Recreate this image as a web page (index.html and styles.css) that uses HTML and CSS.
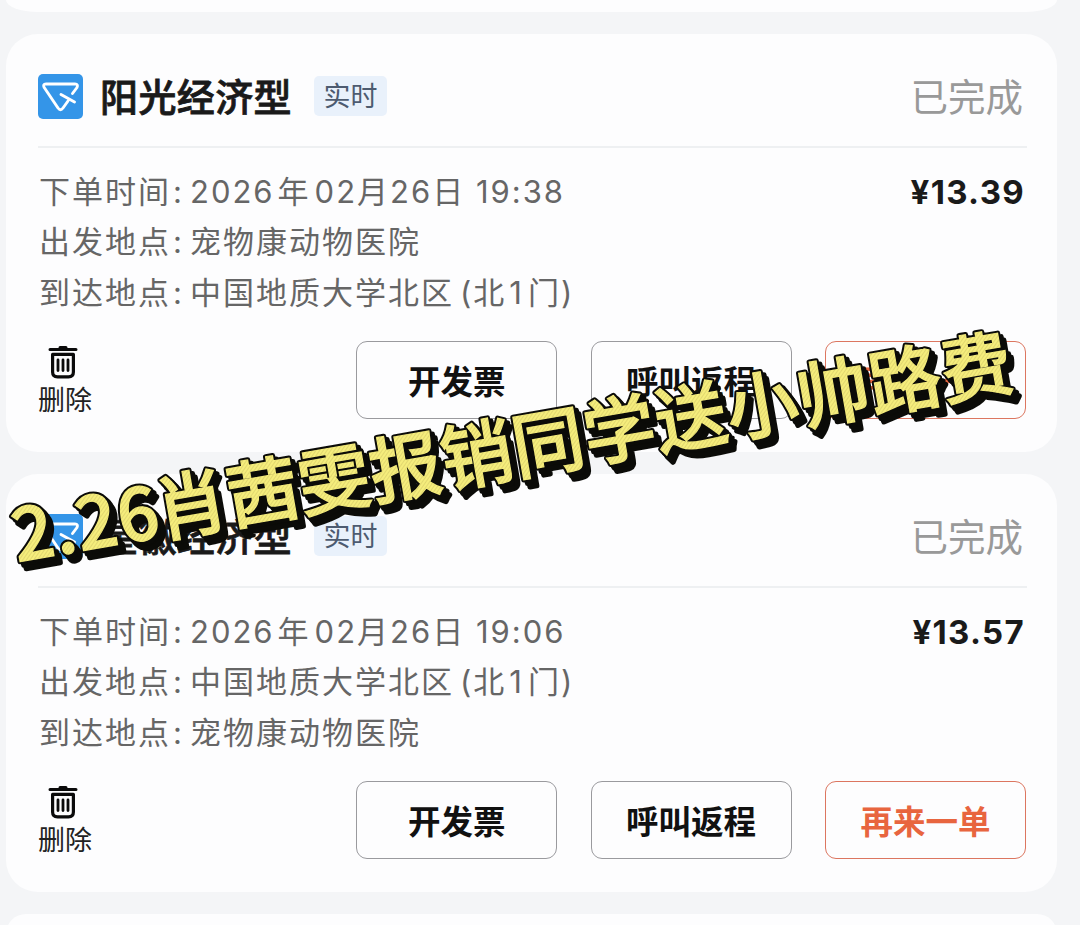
FILE: index.html
```
<!DOCTYPE html>
<html lang="zh-CN">
<head>
  <meta charset="UTF-8" />
  <meta name="viewport" content="width=device-width, initial-scale=1.0"/>
  <title>我的订单</title>
  <link rel="stylesheet" href="styles.css">
</head>
<body>

<svg width="0" height="0" class="defs">
  <symbol id="logo" viewBox="0 0 45 45">
    <rect width="45" height="45" rx="5" fill="#3495e8"/>
    <path d="M34.5 19.500 L39 13.500 Q40.500 10 37 10 H8 Q4.500 10 6.200 13.500 L20 34 Q22.500 37.500 25 34 L30 27 M23 20.500 L36.500 28" fill="none" stroke="#fff" stroke-width="2.900" stroke-linecap="round" stroke-linejoin="round"/>
  </symbol>
  <symbol id="trash" viewBox="0 0 30 34">
    <path d="M2 4.500 H28 M12 2.500 H18" fill="none" stroke="#0b0b0b" stroke-width="3" stroke-linecap="round"/>
    <path d="M4.600 9.400 H25.400 V27 Q25.400 31.800 20.500 31.800 H9.500 Q4.600 31.800 4.600 27 Z" fill="none" stroke="#0b0b0b" stroke-width="3.200" stroke-linejoin="round"/>
    <path d="M10 15 V25.500 M15 15 V25.500 M20 15 V25.500" fill="none" stroke="#0b0b0b" stroke-width="2.800" stroke-linecap="round"/>
  </symbol>
</svg>

<div class="container">
  <div class="card card-prev"></div>

  <div class="card">
    <div class="card-header">
      <svg class="logo"><use href="#logo"/></svg>
      <h2>阳光经济型</h2>
      <span class="tag">实时</span>
      <span class="status">已完成</span>
    </div>
    <div class="card-body">
      <div class="info">
        <p><span class="label">下单时间</span><span class="colon">:</span><span class="date">2026<span class="year">年</span>02月26日 19:38</span></p>
        <p><span class="label">出发地点</span><span class="colon">:</span><span>宠物康动物医院</span></p>
        <p><span class="label">到达地点</span><span class="colon">:</span><span>中国地质大学北区<span class="door">(北<span class="num">1</span>门)</span></span></p>
      </div>
      <div class="price">¥13.39</div>
    </div>
    <div class="card-footer">
      <div class="delete"><svg class="trash"><use href="#trash"/></svg>删除</div>
      <button class="btn">开发票</button>
      <button class="btn">呼叫返程</button>
      <button class="btn btn-again">再来一单</button>
    </div>
  </div>

  <div class="card">
    <div class="card-header">
      <svg class="logo"><use href="#logo"/></svg>
      <h2>星徽经济型</h2>
      <span class="tag">实时</span>
      <span class="status">已完成</span>
    </div>
    <div class="card-body">
      <div class="info">
        <p><span class="label">下单时间</span><span class="colon">:</span><span class="date">2026<span class="year">年</span>02月26日 19:06</span></p>
        <p><span class="label">出发地点</span><span class="colon">:</span><span>中国地质大学北区<span class="door">(北<span class="num">1</span>门)</span></span></p>
        <p><span class="label">到达地点</span><span class="colon">:</span><span>宠物康动物医院</span></p>
      </div>
      <div class="price">¥13.57</div>
    </div>
    <div class="card-footer">
      <div class="delete"><svg class="trash"><use href="#trash"/></svg>删除</div>
      <button class="btn">开发票</button>
      <button class="btn">呼叫返程</button>
      <button class="btn btn-again">再来一单</button>
    </div>
  </div>

  <div class="card card-next"></div>
</div>

<svg class="caption" viewBox="0 0 1080 925">
  <defs>
    <pattern id="stripes" width="3" height="3" patternUnits="userSpaceOnUse" patternTransform="rotate(45)">
      <rect width="3" height="3" fill="#f5ed7c"/>
      <rect width="1" height="3" fill="#e2d870"/>
    </pattern>
  </defs>
  <g transform="translate(17 562) rotate(-9.900)">
    <g class="caption-shadow">
      <text x="0" y="0">2.26<tspan class="words" dx="-3">肖茜雯报销同学送小帅路费</tspan></text>
      <text x="3" y="4">2.26<tspan class="words" dx="-3">肖茜雯报销同学送小帅路费</tspan></text>
      <text x="5" y="8">2.26<tspan class="words" dx="-3">肖茜雯报销同学送小帅路费</tspan></text>
    </g>
    <text class="caption-text" x="0" y="0">2.26<tspan class="words" dx="-3">肖茜雯报销同学送小帅路费</tspan></text>
  </g>
</svg>

</body>
</html>
```
FILE: styles.css
```
* { margin: 0; padding: 0; box-sizing: border-box; }

body {
  font-family: Inter, "Noto Sans CJK SC", sans-serif;
  background: #f4f5f7;
  color: #1a1a1a;
  height: 925px;
  overflow: hidden;
  position: relative;
}

.defs { display: block; }

.container {
  padding: 0 23px 0 6px;
  display: flex;
  flex-direction: column;
  gap: 22px;
}

.card {
  height: 418px;
  flex-shrink: 0;
  background: #fdfdfe;
  border-radius: 32px;
  padding: 0 30px 0 32px;
}

.card-prev {
  height: 12px;
  border-radius: 0 0 32px 32px / 0 0 12px 12px;
}

.card-next { height: 40px; }

.card-header {
  height: 114px;
  border-bottom: 2px solid #eef0f2;
  display: flex;
  align-items: center;
  padding: 12px 4px 0 0;
}

.logo {
  width: 45px;
  height: 45px;
}

h2 {
  font-size: 38px;
  line-height: 50px;
  font-weight: 500;
  -webkit-text-stroke: 0.8px #1a1a1a;
  letter-spacing: 0.4px;
  margin-left: 17px;
  padding-top: 1px;
}

.tag {
  width: 73px;
  height: 40px;
  margin-left: 22px;
  border-radius: 5px;
  background: #e9f1fb;
  color: #4d5b70;
  font-size: 27px;
  line-height: 42px;
  text-align: center;
}

.status {
  margin-left: auto;
  color: #999;
  font-size: 37.5px;
  line-height: 50px;
  padding-top: 3px;
}

.card-body {
  height: 178px;
  padding: 18.5px 2px 0 1px;
  display: flex;
  justify-content: space-between;
}

.info p {
  display: flex;
  height: 50.5px;
  line-height: 50px;
  font-size: 31px;
  letter-spacing: 2px;
  color: #666;
  white-space: nowrap;
}

.label { width: 134px; }
.colon { width: 17px; }
.year { margin: 0 4px 0 3px; }
.door { margin-left: 6px; }
.num { margin: 0 4px 0 3px; }

.price {
  font-size: 33px;
  line-height: 50px;
  font-weight: 700;
  letter-spacing: 1.3px;
}

.card-footer {
  display: flex;
  gap: 33.4px;
  padding: 15px 0 0;
  margin: 0 1px 0 -1px;
}

.delete {
  width: 56px;
  margin-right: auto;
  display: flex;
  flex-direction: column;
  align-items: center;
  gap: 3px;
  padding-top: 4px;
  font-size: 27px;
  line-height: 38px;
  color: #222;
}

.trash {
  width: 30px;
  height: 34px;
  margin-right: 4px;
}

.btn {
  width: 201px;
  height: 78px;
  border: 1.5px solid #9a9a9e;
  border-radius: 11px;
  background: none;
  color: #111;
  font-family: inherit;
  font-size: 32.5px;
  font-weight: 700;
  padding-bottom: 2px;
}

.btn-again {
  color: #e8653f;
  border-color: #dc7660;
}

/* slanted caption over the cards */
.caption {
  position: absolute;
  left: 0;
  top: 0;
  width: 1080px;
  height: 925px;
  pointer-events: none;
}

.caption text {
  font-family: "Noto Sans CJK SC", sans-serif;
  font-size: 72px;
  font-weight: 500;
  letter-spacing: 1px;
}

.caption .words { letter-spacing: 0.4px; }

.caption-shadow {
  fill: #0b0b08;
  stroke: #0b0b08;
  stroke-width: 5.5px;
  stroke-linejoin: round;
}

.caption-text {
  fill: url(#stripes);
  stroke: url(#stripes);
  stroke-width: 1.4px;
}
```
